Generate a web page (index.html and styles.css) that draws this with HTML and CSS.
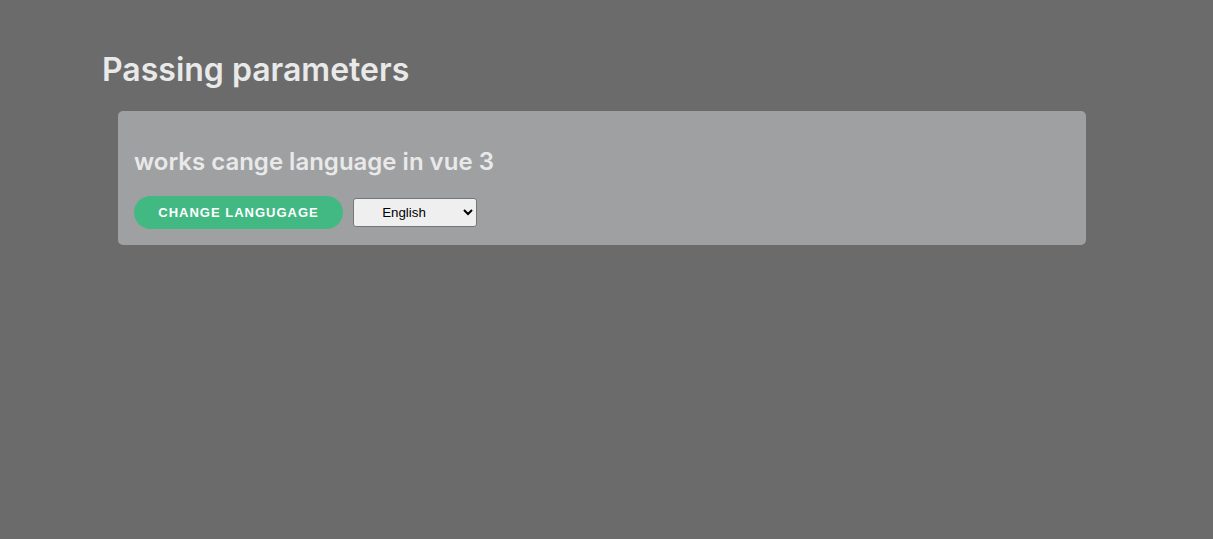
FILE: index.html
```html
<!DOCTYPE html>
<html lang="en">
<head>
<meta charset="utf-8">
<title>Passing parameters</title>
<link rel="stylesheet" href="styles.css">
</head>
<body>
<div class="page">
  <h1 class="title">Passing parameters</h1>
  <div class="card">
    <h2 class="subtitle">works cange language in vue 3</h2>
    <div class="controls">
      <button class="btn">CHANGE LANGUGAGE</button>
      <select class="lang">
        <option>English</option>
        <option>Español</option>
      </select>
    </div>
  </div>
</div>
</body>
</html>
```
FILE: styles.css
```css
html, body {
  margin: 0;
  padding: 0;
  background: #6b6b6b;
  height: 100%;
}
body {
  font-family: Inter, "Noto Sans", sans-serif;
  color: #e9e9ea;
}
.page {
  width: 1000px;
  margin-left: 102px;
  padding-top: 50px;
}
.title {
  margin: 0;
  font-size: 32px;
  line-height: 40px;
  font-weight: 600;
  color: #e9e9ea;
}
.card {
  margin: 21px 16px 0;
  background: #9fa0a2;
  border-radius: 5px;
  padding: 36px 16px 16px;
}
.subtitle {
  margin: 0 0 19px;
  font-size: 24px;
  line-height: 30px;
  font-weight: 600;
  color: #e9e9ea;
}
.controls {
  display: flex;
  align-items: center;
  gap: 10px;
}
.btn {
  width: 209px;
  height: 33px;
  border: none;
  border-radius: 17px;
  background: #42b983;
  color: #ffffff;
  font-family: "Liberation Sans", Arial, sans-serif;
  font-weight: 700;
  font-size: 13px;
  letter-spacing: 1px;
  padding: 0;
}
.lang {
  width: 124px;
  height: 29px;
  background: #efefef;
  border: 1px solid #767676;
  border-radius: 3px;
  font-family: "Liberation Sans", Arial, sans-serif;
  font-size: 13.33px;
  text-align: center;
  padding: 0 10px 0 0;
  color: #000;
}
```
